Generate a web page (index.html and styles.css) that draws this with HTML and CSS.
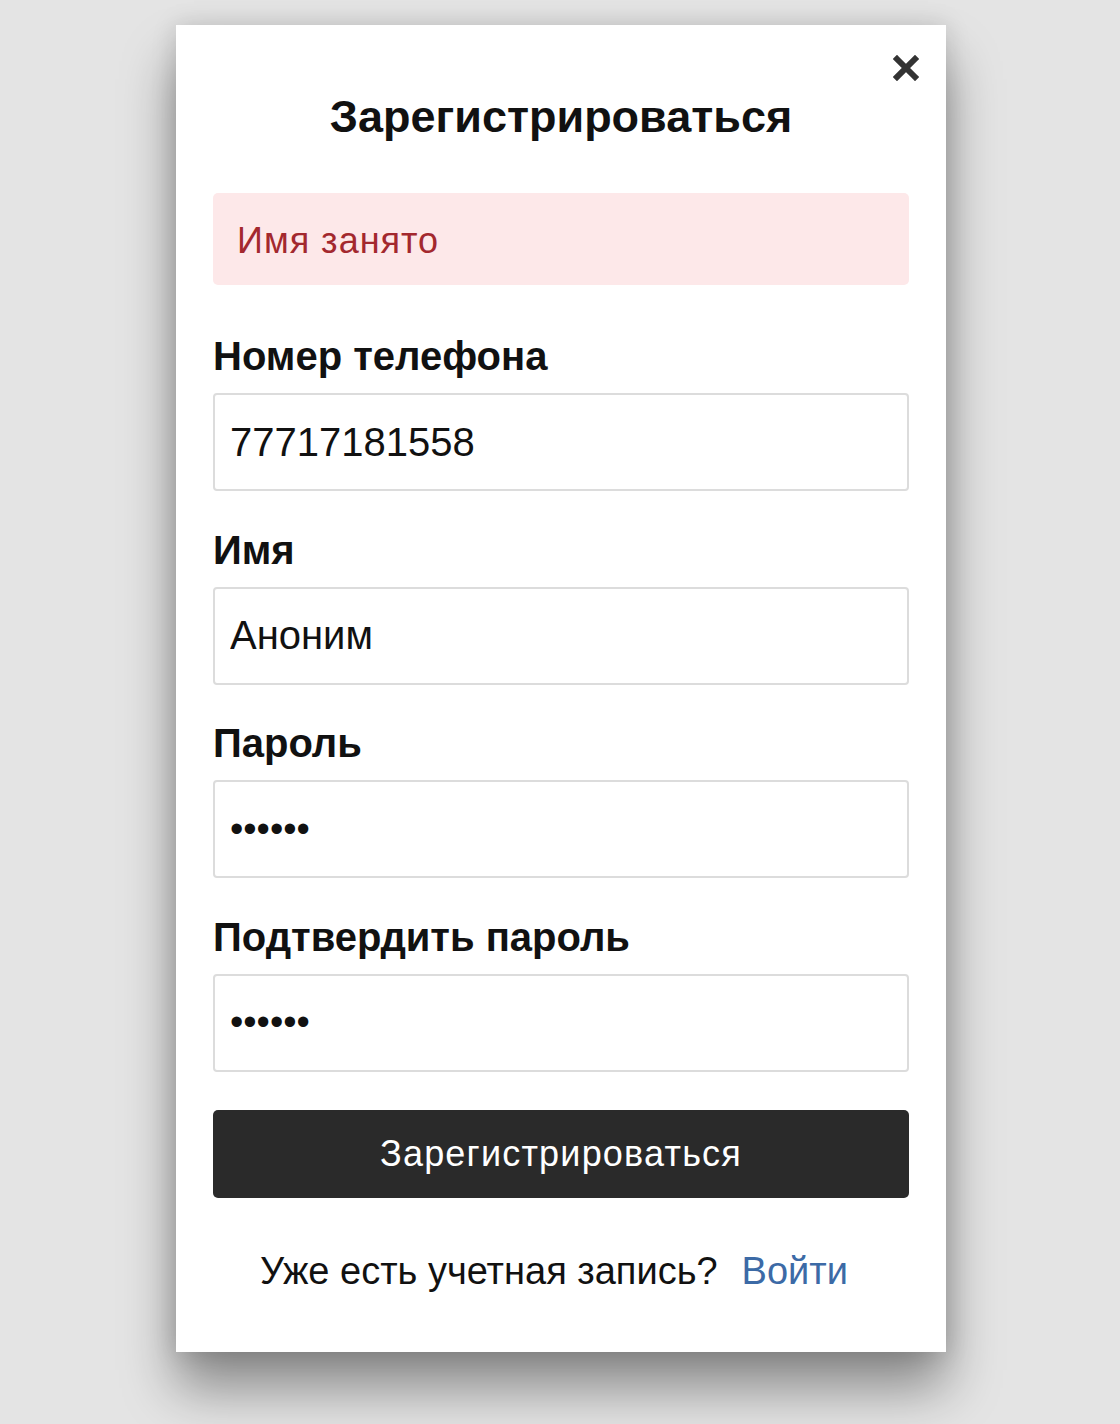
FILE: index.html
```html
<!DOCTYPE html>
<html lang="ru">
<head>
<meta charset="utf-8">
<title>Зарегистрироваться</title>
<link rel="stylesheet" href="styles.css">
</head>
<body>
<div class="page">
  <div class="card">
    <button class="close" type="button" aria-label="Закрыть">
      <svg width="26" height="26" viewBox="0 0 26 26"><path d="M4 4 L22 22 M22 4 L4 22" stroke="#333" stroke-width="6" stroke-linecap="square" fill="none"/></svg>
    </button>
    <h1 class="title">Зарегистрироваться</h1>
    <div class="alert">Имя занято</div>
    <form class="form">
      <div class="group">
        <label class="label">Номер телефона</label>
        <input class="input" type="text" value="77717181558">
      </div>
      <div class="group">
        <label class="label">Имя</label>
        <input class="input" type="text" value="Аноним">
      </div>
      <div class="group">
        <label class="label">Пароль</label>
        <input class="input input-pass" type="password" value="123456">
      </div>
      <div class="group">
        <label class="label">Подтвердить пароль</label>
        <input class="input input-pass" type="password" value="123456">
      </div>
      <button class="submit" type="button">Зарегистрироваться</button>
    </form>
    <p class="footer">Уже есть учетная запись?<a class="link" href="#">Войти</a></p>
  </div>
</div>
</body>
</html>
```

FILE: styles.css
```css
html, body {
  margin: 0;
  padding: 0;
}
body {
  background: #e4e4e4;
  font-family: "Liberation Sans", Arial, sans-serif;
  color: #111;
}
.page {
  min-height: 1424px;
  padding: 25px 0 0 176px;
  box-sizing: border-box;
}
.card {
  position: relative;
  width: 770px;
  box-sizing: border-box;
  background: #fff;
  padding: 67px 37px 58px 37px;
  box-shadow: 0 36px 50px rgba(0, 0, 0, 0.4), 0 0 24px rgba(0, 0, 0, 0.14);
}
.close {
  position: absolute;
  top: 30px;
  right: 27px;
  width: 26px;
  height: 26px;
  padding: 0;
  border: 0;
  background: transparent;
  display: flex;
}
.title {
  margin: 0;
  font-size: 45px;
  line-height: 50px;
  font-weight: bold;
  text-align: center;
  color: #111;
}
.alert {
  margin-top: 51px;
  height: 92px;
  box-sizing: border-box;
  padding: 4px 24px 0;
  line-height: 88px;
  font-size: 36px;
  letter-spacing: 1px;
  color: #a3282e;
  background: #fde8e9;
  border-radius: 5px;
}
.form {
  margin: 48px 0 0;
  display: flex;
  flex-direction: column;
  gap: 35.5px;
}
.group {
  display: flex;
  flex-direction: column;
  gap: 14px;
}
.label {
  font-size: 40px;
  line-height: 46px;
  font-weight: bold;
  color: #111;
}
.input {
  height: 98px;
  box-sizing: border-box;
  border: 2px solid #dcdcdc;
  border-radius: 4px;
  padding: 0 15px;
  font-family: "Liberation Sans", Arial, sans-serif;
  font-size: 40px;
  color: #111;
  background: #fff;
  outline: none;
  width: 100%;
}
.input-pass {
  font-size: 38px;
}
.submit {
  margin-top: 3px;
  height: 88px;
  border: 0;
  border-radius: 5px;
  background: #2a2a2a;
  color: #fff;
  font-family: "Liberation Sans", Arial, sans-serif;
  font-size: 36px;
  letter-spacing: 1.2px;
}
.footer {
  margin: 50px 0 0;
  padding-right: 14px;
  text-align: center;
  font-size: 38px;
  line-height: 46px;
  color: #111;
}
.link {
  margin-left: 24px;
  color: #3c6aa6;
  text-decoration: none;
}
```
